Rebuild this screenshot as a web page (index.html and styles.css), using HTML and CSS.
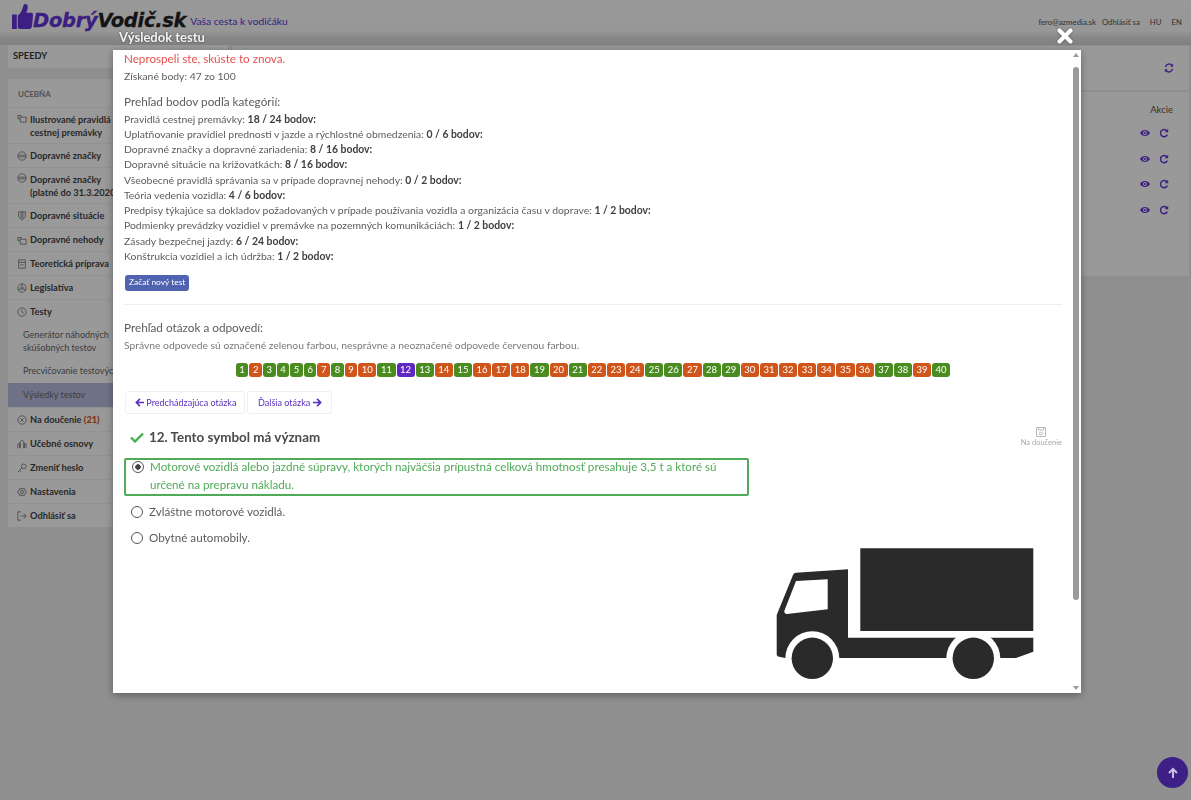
FILE: index.html
```html
<!DOCTYPE html>
<html lang="sk">
<head>
<meta charset="utf-8">
<title>DobrýVodič.sk</title>
<link rel="stylesheet" href="styles.css">
</head>
<body>
<svg class="defs" width="0" height="0">
  <symbol id="i-book" viewBox="0 0 12 12"><path d="M1 6V3h4v2M5 5h6v6H4V7H1z" fill="none" stroke="currentColor"/></symbol>
  <symbol id="i-sign" viewBox="0 0 12 12"><circle cx="6" cy="6" r="5" fill="none" stroke="currentColor"/><path d="M1.500 5h9M1.500 7h9" stroke="currentColor"/></symbol>
  <symbol id="i-shield" viewBox="0 0 12 12"><path d="M2 1h8v6l-4 4-4-4zM5 1v8M7 1v8" fill="none" stroke="currentColor"/></symbol>
  <symbol id="i-note" viewBox="0 0 12 12"><path d="M2 1h8v10H2zM2 4h8M4 7h4" fill="none" stroke="currentColor"/></symbol>
  <symbol id="i-law" viewBox="0 0 12 12"><circle cx="6" cy="6" r="5" fill="none" stroke="currentColor"/><circle cx="6" cy="6" r="1.600" fill="none" stroke="currentColor"/><path d="M6 1v3M1.500 8.500 4.500 7M10.500 8.500 7.500 7" stroke="currentColor"/></symbol>
  <symbol id="i-clock" viewBox="0 0 12 12"><circle cx="6" cy="6" r="5" fill="none" stroke="currentColor"/><path d="M6 3v3l2 1.500" fill="none" stroke="currentColor"/></symbol>
  <symbol id="i-x" viewBox="0 0 12 12"><circle cx="6" cy="6" r="5" fill="none" stroke="currentColor"/><path d="M4 4l4 4M8 4l-4 4" stroke="currentColor"/></symbol>
  <symbol id="i-plan" viewBox="0 0 12 12"><path d="M1 11V6l2-1v6M4 11V3l2-2 2 2v8M9 11V5l2 1v5" fill="none" stroke="currentColor"/></symbol>
  <symbol id="i-key" viewBox="0 0 12 12"><circle cx="8" cy="4" r="2.800" fill="none" stroke="currentColor"/><path d="M6 6l-5 5M3 9l1.500 1.500" fill="none" stroke="currentColor"/></symbol>
  <symbol id="i-cog" viewBox="0 0 12 12"><circle cx="6" cy="6" r="1.800" fill="none" stroke="currentColor"/><path d="M6 1l1 1.500 2-.5.500 2L11 5v2l-1.500 1-.5 2-2-.5-1 1.500-1-1.500-2 .5-.5-2L1 7V5l1.500-1L3 2l2 .5z" fill="none" stroke="currentColor"/></symbol>
  <symbol id="i-out" viewBox="0 0 12 12"><path d="M5 1H1v10h4M4 6h7M8 3l3 3-3 3" fill="none" stroke="currentColor"/></symbol>
  <symbol id="i-eye" viewBox="0 0 14 10"><path fill-rule="evenodd" d="M0 5C3-.7 11-.7 14 5 11 10.700 3 10.700 0 5zM7 2.200a2.800 2.800 0 1 0 0 5.600 2.800 2.800 0 0 0 0-5.600z" fill="currentColor"/><circle cx="7" cy="5" r="1.500" fill="currentColor"/></symbol>
  <symbol id="i-redo" viewBox="0 0 12 12"><path d="M9.300 3.200A4.300 4.300 0 1 0 10 8" fill="none" stroke="currentColor" stroke-width="1.700"/><path d="M11 0.800V5H6.800z" fill="currentColor"/></symbol>
  <symbol id="i-sync" viewBox="0 0 12 12"><path d="M1.800 5A4.300 4.300 0 0 1 9.500 3M10.200 7A4.300 4.300 0 0 1 2.500 9" fill="none" stroke="currentColor" stroke-width="1.700"/><path d="M11 1v3.500H7.500zM1 11V7.500h3.500z" fill="currentColor"/></symbol>
  <symbol id="i-left" viewBox="0 0 10 10"><path d="M5.500 1L1.500 5l4 4M1.500 5H10" fill="none" stroke="currentColor" stroke-width="1.800"/></symbol>
  <symbol id="i-right" viewBox="0 0 10 10"><path d="M4.500 1l4 4-4 4M8.500 5H0" fill="none" stroke="currentColor" stroke-width="1.800"/></symbol>
</svg>

<header class="topbar">
  <div class="brand">
    <svg class="thumb" viewBox="0 0 22 28"><path d="M0 12h5v15H0zM6 13c2-1 4-4 5-7 .7-2.500 1-5 3-5 2.500 0 3 3 2 6l-1 3h5c2 0 2.500 2 2 3l-1 11c-.3 2-1.500 3-3 3H9c-1.500 0-3-1-3-1z" fill="currentColor"/></svg>
    <span class="logo"><span class="logo-a">Dobrý</span>Vodič.sk</span>
    <span class="tagline">Vaša cesta k vodičáku</span>
  </div>
  <nav class="usernav">
    <span>fero@azmedia.sk</span><span>Odhlásiť sa</span><span class="lang">HU</span><span class="lang">EN</span>
  </nav>
</header>

<main class="page">
  <aside class="side">
    <div class="side-head">SPEEDY</div>
    <ul class="menu">
      <li class="menu-title">UČEBŇA</li>
      <li class="item two"><svg class="ic"><use href="#i-book"/></svg><span>Ilustrované pravidlá cestnej premávky</span></li>
      <li class="item"><svg class="ic"><use href="#i-sign"/></svg><span>Dopravné značky</span></li>
      <li class="item two"><svg class="ic"><use href="#i-sign"/></svg><span>Dopravné značky<br>(platné do 31.3.2020)</span></li>
      <li class="item"><svg class="ic"><use href="#i-shield"/></svg><span>Dopravné situácie</span></li>
      <li class="item"><svg class="ic"><use href="#i-book"/></svg><span>Dopravné nehody</span></li>
      <li class="item"><svg class="ic"><use href="#i-note"/></svg><span>Teoretická príprava</span></li>
      <li class="item"><svg class="ic"><use href="#i-law"/></svg><span>Legislatíva</span></li>
      <li class="item"><svg class="ic"><use href="#i-clock"/></svg><span>Testy</span></li>
      <li class="sub two">Generátor náhodných<br>skúšobných testov</li>
      <li class="sub">Precvičovanie testových otázok</li>
      <li class="sub active">Výsledky testov</li>
      <li class="item"><svg class="ic"><use href="#i-x"/></svg><span>Na doučenie <b class="count">(21)</b></span></li>
      <li class="item"><svg class="ic"><use href="#i-plan"/></svg><span>Učebné osnovy</span></li>
      <li class="item"><svg class="ic"><use href="#i-key"/></svg><span>Zmeniť heslo</span></li>
      <li class="item"><svg class="ic"><use href="#i-cog"/></svg><span>Nastavenia</span></li>
      <li class="item"><svg class="ic"><use href="#i-out"/></svg><span>Odhlásiť sa</span></li>
    </ul>
  </aside>
  <section class="content">
    <div class="card card-top"><svg class="sync"><use href="#i-sync"/></svg></div>
    <div class="card card-table">
      <div class="akcie">Akcie</div>
      <div class="acts"><svg class="eye"><use href="#i-eye"/></svg><svg class="redo"><use href="#i-redo"/></svg></div>
      <div class="acts"><svg class="eye"><use href="#i-eye"/></svg><svg class="redo"><use href="#i-redo"/></svg></div>
      <div class="acts"><svg class="eye"><use href="#i-eye"/></svg><svg class="redo"><use href="#i-redo"/></svg></div>
      <div class="acts"><svg class="eye"><use href="#i-eye"/></svg><svg class="redo"><use href="#i-redo"/></svg></div>
    </div>
  </section>
</main>

<div class="overlay">
  <div class="totop"><svg viewBox="0 0 12 12"><path d="M6 11V2M2 6l4-4 4 4" fill="none" stroke="currentColor" stroke-width="2"/></svg></div>
  <div class="dialog">
    <div class="dialog-title">Výsledok testu</div>
    <svg class="close" viewBox="0 0 16 16"><path d="M2.500 2.500l11 11M13.500 2.500l-11 11" stroke="#fff" stroke-width="4.200" stroke-linecap="round"/></svg>
    <div class="dialog-body">
      <h2 class="fail">Neprospeli ste, skúste to znova.</h2>
      <p class="score">Získané body: 47 zo 100</p>
      <h3 class="sec-title sec-first">Prehľad bodov podľa kategórií:</h3>
      <ul class="cats">
        <li>Pravidlá cestnej premávky: <b>18 / 24 bodov:</b></li>
        <li>Uplatňovanie pravidiel prednosti v jazde a rýchlostné obmedzenia: <b>0 / 6 bodov:</b></li>
        <li>Dopravné značky a dopravné zariadenia: <b>8 / 16 bodov:</b></li>
        <li>Dopravné situácie na križovatkách: <b>8 / 16 bodov:</b></li>
        <li>Všeobecné pravidlá správania sa v prípade dopravnej nehody: <b>0 / 2 bodov:</b></li>
        <li>Teória vedenia vozidla: <b>4 / 6 bodov:</b></li>
        <li>Predpisy týkajúce sa dokladov požadovaných v prípade používania vozidla a organizácia času v doprave: <b>1 / 2 bodov:</b></li>
        <li>Podmienky prevádzky vozidiel v premávke na pozemných komunikáciách: <b>1 / 2 bodov:</b></li>
        <li>Zásady bezpečnej jazdy: <b>6 / 24 bodov:</b></li>
        <li>Konštrukcia vozidiel a ich údržba: <b>1 / 2 bodov:</b></li>
      </ul>
      <a class="newtest">Začať nový test</a>
      <hr class="rule">
      <h3 class="sec-title">Prehľad otázok a odpovedí:</h3>
      <p class="hint">Správne odpovede sú označené zelenou farbou, nesprávne a neoznačené odpovede červenou farbou.</p>
      <div class="pager">
        <a class="g">1</a><a class="r">2</a><a class="g">3</a><a class="g">4</a><a class="g">5</a><a class="g">6</a><a class="r">7</a><a class="g">8</a><a class="r">9</a><a class="r">10</a><a class="g">11</a><a class="p">12</a><a class="g">13</a><a class="r">14</a><a class="g">15</a><a class="r">16</a><a class="r">17</a><a class="r">18</a><a class="g">19</a><a class="r">20</a><a class="g">21</a><a class="r">22</a><a class="r">23</a><a class="r">24</a><a class="g">25</a><a class="g">26</a><a class="r">27</a><a class="g">28</a><a class="g">29</a><a class="r">30</a><a class="r">31</a><a class="r">32</a><a class="r">33</a><a class="r">34</a><a class="r">35</a><a class="r">36</a><a class="g">37</a><a class="g">38</a><a class="r">39</a><a class="g">40</a>
      </div>
      <div class="qnav">
        <a class="navbtn nav-prev"><svg class="arrow"><use href="#i-left"/></svg> Predchádzajúca otázka</a>
        <a class="navbtn nav-next">Ďalšia otázka <svg class="arrow"><use href="#i-right"/></svg></a>
      </div>
      <div class="qhead">
        <svg class="check" viewBox="0 0 14 11"><path d="M1 5.500l4 4 8-8" fill="none" stroke="#3fb04f" stroke-width="2.400"/></svg>
        <h4 class="qtitle">12. Tento symbol má význam</h4>
        <div class="later">
          <svg viewBox="0 0 12 12"><path d="M1.500 1.500h9v9h-9zM3.500 1.500v2.500h5V1.500M6 6a1.500 1.500 0 1 0 .01 0" fill="none" stroke="currentColor" stroke-width=".8"/></svg>
          <span>Na doučenie</span>
        </div>
      </div>
      <div class="qbody">
        <div class="answers">
          <div class="ans correct"><span class="radio on"></span><span class="ans-text">Motorové vozidlá alebo jazdné súpravy, ktorých najväčšia prípustná celková hmotnosť presahuje 3,5 t a ktoré sú určené na prepravu nákladu.</span></div>
          <div class="ans"><span class="radio"></span><span>Zvláštne motorové vozidlá.</span></div>
          <div class="ans"><span class="radio"></span><span>Obytné automobily.</span></div>
        </div>
        <svg class="truck" viewBox="776 548 258 132">
          <path fill="#2a2a2a" d="M860.300 548.300H1033.300V631H860.300z"/>
          <path fill="#2a2a2a" d="M848 569.300V637.700H1033.300V651.700L1016 658H785L778 656.500 776.700 655V615L793 575Q794 572.800 796 572.700z"/>
          <circle cx="812.300" cy="658.300" r="27" fill="#fff"/>
          <circle cx="973.300" cy="658.300" r="27" fill="#fff"/>
          <rect x="760" y="658" width="290" height="30" fill="#fff"/>
          <circle cx="812.300" cy="658.300" r="20.700" fill="#2a2a2a"/>
          <circle cx="973.300" cy="658.300" r="20.700" fill="#2a2a2a"/>
          <path fill="#fff" d="M796 581L827.700 579.300V609.300L787 614Q784 613.500 784.300 611z"/>
        </svg>
      </div>
    </div>
    <div class="scroll">
      <span class="up"></span>
      <span class="thumbbar"></span>
      <span class="down"></span>
    </div>
  </div>
</div>
</body>
</html>
```
FILE: styles.css
```css
* { box-sizing: border-box; }
html, body { margin: 0; padding: 0; height: 100%; overflow: hidden; }
body { background: #eeeeee; font-family: "Lato", "Noto Sans", sans-serif; color: #3a3a3a; font-size: 11px; }
.defs { position: absolute; }
ul { list-style: none; margin: 0; padding: 0; }
h2, h3, h4, p { margin: 0; font-weight: 400; }

.topbar { height: 45px; display: flex; justify-content: space-between; align-items: flex-start; background: linear-gradient(#ffffff 0, #fcfcfc 31px, #e4e4e4 37px, #d6d6d6 45px); }
.brand { display: flex; align-items: flex-start; padding-left: 12px; color: #6633d9; }
.thumb { width: 21px; height: 27px; margin-top: 3px; }
.logo { font: italic 700 19.500px/1 "DejaVu Sans", sans-serif; color: #222; margin-top: 11px; letter-spacing: -.3px; -webkit-text-stroke: .3px currentColor; }
.logo-a { color: #6633d9; }
.tagline { font-size: 10.300px; line-height: 14px; margin: 14px 0 0 4px; }
.usernav { display: flex; gap: 6px; font-size: 7.800px; line-height: 12px; padding: 16px 9px 0 0; color: #555; }
.lang { margin-left: 4px; }

.page { display: flex; padding-right: 2px; }
.side { width: 220px; flex: none; margin-left: 8px; }
.side-head { height: 23px; background: #fff; padding: 4px 5px; font-weight: 700; font-size: 9.300px; line-height: 14px; }
.menu { margin-top: 11px; background: #fff; padding-top: 8px; }
.menu-title { height: 20px; padding-left: 10px; font-size: 8px; line-height: 14px; font-weight: 700; color: #888; }
.item { display: flex; align-items: center; gap: 3px; height: 24px; padding: 0 0 0 9px; font-weight: 700; font-size: 9.250px; line-height: 13px; border-top: 1px solid #f3f3f3; color: #444; }
.item.two { height: 36px; align-items: flex-start; padding-top: 5px; }
.item:nth-child(2) span { max-width: 88px; }
.ic { width: 10px; height: 10px; flex: none; color: #777; }
.sub { height: 24px; padding-left: 15px; font-size: 9px; line-height: 24px; color: #666; white-space: nowrap; }
.sub.two { height: 36px; line-height: 13px; padding-top: 5px; }
.sub.active { background: #b9bfe0; }
.count { color: #d0551b; }

.content { flex: 1; display: flex; flex-direction: column; gap: 2px; margin-left: 4px; }
.card { background: #fff; }
.card-top { height: 44px; display: flex; justify-content: flex-end; align-items: center; padding-right: 15px; margin-top: 1px; }
.sync { width: 10px; height: 10px; color: #6633d9; }
.card-table { height: 184px; padding: 12px 16px 0 0; }
.akcie { text-align: right; font-size: 9.500px; line-height: 12px; color: #6b5533; margin-bottom: 4px; }
.acts { display: flex; justify-content: flex-end; align-items: center; gap: 9px; height: 25.700px; padding-right: 4px; color: #6633d9; }
.eye { width: 10px; height: 8px; }
.redo { width: 10px; height: 10px; }

.overlay { position: fixed; inset: 0; background: rgba(0, 0, 0, .4); }
.totop { position: absolute; left: 1157px; top: 757px; width: 31px; height: 31px; border-radius: 50%; background: #3d1f85; color: #c9bfe0; display: flex; align-items: center; justify-content: center; }
.totop svg { width: 12px; height: 12px; }

.dialog { position: absolute; left: 113px; top: 50px; width: 968px; height: 643px; background: #fff; display: flex; box-shadow: 0 2px 8px rgba(0, 0, 0, .35); }
.dialog-title { position: absolute; left: 6px; top: -20px; font-size: 13px; line-height: 15px; font-weight: 700; color: #f4f4f4; text-shadow: 0 0 2px rgba(0, 0, 0, .6); }
.close { position: absolute; left: 944px; top: -22px; width: 16px; height: 16px; filter: drop-shadow(0 0 1px rgba(0, 0, 0, .5)); }
.dialog-body { flex: 1; min-width: 0; overflow: hidden; padding: 0 7px 0 11px; color: #5c5c5c; }
.fail { font-size: 11.650px; line-height: 18px; color: #e3514f; }
.score { font-size: 10.400px; line-height: 16px; }
.sec-title { font-size: 11.750px; line-height: 16px; color: #5c5c5c; }
.sec-first { margin-top: 10px; }
.cats { margin-top: 1.500px; }
.cats li { font-size: 10.400px; line-height: 15.250px; }
.cats b { font-weight: 700; color: #3f3f3f; }
.newtest { display: inline-block; margin: 11px 0 0 1px; height: 16px; padding: 0 4px; border-radius: 3px; background: #4f63b0; color: #fff; font-size: 8.400px; line-height: 15px; }
.rule { border: 0; border-top: 1px solid #eeeeee; margin: 13px 0 15px; }
.hint { margin-top: 2px; font-size: 10.300px; line-height: 14px; color: #7a7a7a; }
.pager { display: flex; justify-content: center; gap: 1px; margin-top: 11px; height: 14px; }
.pager a { display: block; height: 14px; padding: 0 3.550px; border-radius: 3px; color: #fff; font-size: 9.500px; line-height: 14px; }
.g { background: #4a8c1f; }
.r { background: #d0551b; }
.p { background: #6028c0; }
.qnav { display: flex; gap: 2px; margin: 14px 0 0 1px; }
.navbtn { display: block; height: 23px; padding: 0 9px; border: 1px solid #f0f0f0; border-radius: 3px; color: #5a2dc0; font-size: 9.050px; line-height: 21px; white-space: nowrap; }
.nav-prev { width: 120px; }
.nav-next { width: 85px; padding-left: 10px; }
.arrow { width: 9px; height: 9px; vertical-align: -1px; }
.qhead { display: flex; align-items: center; height: 30px; margin-top: 8px; padding-left: 6px; }
.check { width: 14px; height: 11px; flex: none; }
.qtitle { margin-left: 5px; font-size: 13.400px; line-height: 18px; font-weight: 700; color: #4a4a4a; }
.later { margin-left: auto; display: flex; flex-direction: column; align-items: center; color: #a8a8a8; font-size: 7.500px; line-height: 10px; }
.later svg { width: 12px; height: 12px; }
.qbody { display: flex; align-items: flex-start; margin-top: 6px; }
.answers { width: 625px; flex: none; }
.ans { display: flex; align-items: flex-start; gap: 6px; font-size: 11.650px; line-height: 18px; height: 26px; padding: 4.500px 0 0 7px; color: #5c5c5c; }
.ans.correct { height: 38px; border: 2px solid #4fab58; border-radius: 2px; padding: 0 20px 0 6px; color: #4fab58; margin-bottom: 2px; }
.ans-text { margin-top: -2px; }
.radio { width: 12px; height: 12px; flex: none; border: 1.200px solid #555; border-radius: 50%; margin-top: 3px; background: #fff; }
.radio.on { margin-top: 1px; background: radial-gradient(circle, #444 0, #444 2.500px, #fff 3px); }
.truck { width: 258px; height: 132px; flex: none; margin: 90px 28px 0 auto; }
.scroll { width: 12px; flex: none; display: flex; flex-direction: column; align-items: center; padding: 0 0 0 2px; }
.up { width: 0; height: 0; border: 3px solid transparent; border-bottom: 4px solid #9a9a9a; border-top: 0; margin-top: 3px; }
.thumbbar { width: 6px; height: 533px; background: #9a9a9a; border-radius: 3px; margin-top: 10px; }
.down { width: 0; height: 0; border: 3px solid transparent; border-top: 4px solid #9a9a9a; border-bottom: 0; margin-top: 86px; }
```
